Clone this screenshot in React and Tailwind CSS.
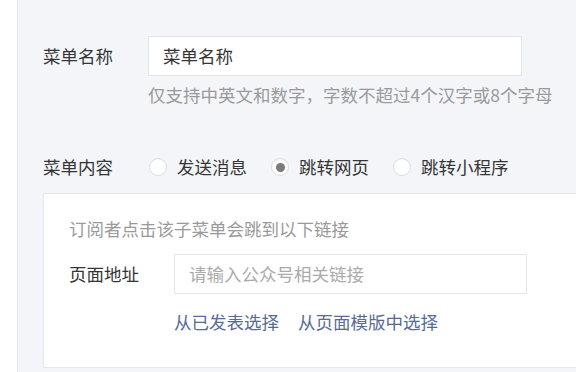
import React from "react";

const font = { fontFamily: '"Noto Sans CJK SC", "Noto Sans", sans-serif' };

function Radio({ checked, label }) {
  return (
    <label className="flex items-center">
      <span className="flex h-[18px] w-[18px] items-center justify-center rounded-full border border-[#dcdde0] bg-white shadow-[inset_0_1px_1px_rgba(0,0,0,0.04)]">
        {checked && <span className="h-[9px] w-[9px] rounded-full bg-[#7b7b7b]" />}
      </span>
      <span className="ml-[10px] text-[17.5px] leading-[24px] text-[#353535]">{label}</span>
    </label>
  );
}

export default function App() {
  return (
    <div className="flex h-[372px] w-[576px] overflow-hidden" style={font}>
      <div className="w-[18px] shrink-0 border-r border-[#e4e6eb] bg-white" />
      <div className="flex-1 overflow-hidden bg-[#f4f5f9] pl-[25px] pt-[36px]">
        <div className="flex h-[40px] items-center">
          <div className="w-[105px] shrink-0 text-[17.5px] leading-[24px] text-[#353535]">菜单名称</div>
          <div className="flex h-[40px] w-[374px] shrink-0 items-center border border-[#e4e6eb] bg-white px-[14px] text-[17.5px] text-[#353535]">
            菜单名称
          </div>
        </div>
        <div className="ml-[105px] mt-[7px] whitespace-nowrap text-[17.5px] leading-[24px] text-[#9a9a9a]">
          仅支持中英文和数字，字数不超过4个汉字或8个字母
        </div>
        <div className="mt-[48px] flex h-[24px] items-center">
          <div className="w-[106px] shrink-0 text-[17.5px] leading-[24px] text-[#353535]">菜单内容</div>
          <div className="flex items-center gap-[24px]">
            <Radio label="发送消息" />
            <Radio checked label="跳转网页" />
            <Radio label="跳转小程序" />
          </div>
        </div>
        <div className="mt-[14px] h-[175px] w-[560px] border border-[#e4e6eb] bg-white pl-[25px] pt-[23px]">
          <div className="text-[17.5px] leading-[24px] text-[#9a9a9a]">订阅者点击该子菜单会跳到以下链接</div>
          <div className="mt-[13px] flex h-[40px] items-center">
            <div className="w-[105px] shrink-0 text-[17.5px] leading-[24px] text-[#353535]">页面地址</div>
            <div className="flex h-[40px] w-[353px] shrink-0 items-center border border-[#e4e6eb] bg-white px-[14px] text-[17.5px] text-[#ababab]">
              请输入公众号相关链接
            </div>
          </div>
          <div className="ml-[105px] mt-[16px] flex gap-[19px] text-[17.5px] leading-[24px] text-[#576b95]">
            <span>从已发表选择</span>
            <span>从页面模版中选择</span>
          </div>
        </div>
      </div>
    </div>
  );
}
